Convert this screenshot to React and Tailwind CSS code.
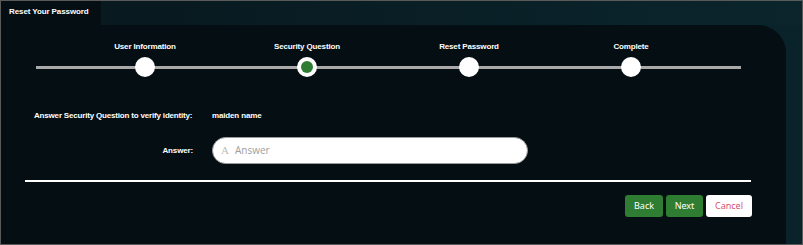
export default function App() {
  const steps = ["User Information", "Security Question", "Reset Password", "Complete"];
  const font = { fontFamily: '"Liberation Sans", Arial, sans-serif' };
  return (
    <div
      className="w-[803px] h-[245px] border border-[#5a5a5a] bg-[#0a2229] flex flex-col overflow-hidden"
      style={font}
    >
      <div className="flex h-[24px] shrink-0">
        <div className="w-[100px] bg-[#040e13] flex items-center pl-[8px] text-[8px] font-bold text-white pb-[3px] tracking-[-0.1px]">
          Reset Your Password
        </div>
        <div className="flex-1 bg-gradient-to-r from-[#08191f] to-[#0b252d]" />
      </div>
      <div className="flex flex-1">
        <div className="flex-1 bg-[#040e13] rounded-tr-[28px] mr-[16px] flex flex-col pt-[16px]">
          <div className="relative ml-[35px] w-[705px] h-[36px]">
            <div className="absolute left-0 right-0 top-[25px] h-[3px] bg-[#a9a9a9]" />
            <div className="relative flex ml-[28px]">
              {steps.map((s, i) => (
                <div key={s} className="w-[162px] flex flex-col items-center">
                  <div className="h-[11px] text-[8px] font-bold text-white leading-[11px] whitespace-nowrap tracking-[-0.15px]">{s}</div>
                  <div className="mt-[5px] w-[20px] h-[20px] rounded-full bg-white flex items-center justify-center">
                    {i === 1 && <div className="w-[12px] h-[12px] rounded-full bg-[#2e7d32]" />}
                  </div>
                </div>
              ))}
            </div>
          </div>
          <div className="flex items-center mt-[33px] h-[11px]">
            <div className="w-[192px] pl-[33px] text-[8px] font-bold text-white whitespace-nowrap tracking-[-0.18px]">
              Answer Security Question to verify identity:
            </div>
            <div className="ml-[19px] text-[8px] font-bold text-white tracking-[-0.15px]">maiden name</div>
          </div>
          <div className="flex items-center mt-[16px]">
            <div className="w-[192px] text-right text-[8px] font-bold text-white tracking-[-0.15px]">Answer:</div>
            <div className="ml-[19px] w-[316px] h-[27px] rounded-full bg-white border border-[#9a9a9a] flex items-center pl-[8px]">
              <span className="text-[11px] text-[#bdbdbd]" style={{ fontFamily: '"Liberation Serif", serif' }}>A</span>
              <span className="ml-[6px] text-[10px] text-[#9e9e9e]" style={{ fontFamily: '"Open Sans", sans-serif' }}>Answer</span>
            </div>
          </div>
          <div className="mt-[16px] ml-[24px] w-[726px] h-[2px] bg-white" />
          <div className="flex justify-end gap-[3px] mt-[13px] w-[751px]">
            <button className="w-[38px] h-[22px] rounded-[3px] bg-[#2e7d32] text-white text-[9px]" style={{ fontFamily: '"Noto Sans", sans-serif' }}>Back</button>
            <button className="w-[37px] h-[22px] rounded-[3px] bg-[#2e7d32] text-white text-[9px]" style={{ fontFamily: '"Noto Sans", sans-serif' }}>Next</button>
            <button className="w-[46px] h-[22px] rounded-[3px] bg-white text-[#d9506e] text-[9px]" style={{ fontFamily: '"Noto Sans", sans-serif' }}>Cancel</button>
          </div>
        </div>
      </div>
    </div>
  );
}
